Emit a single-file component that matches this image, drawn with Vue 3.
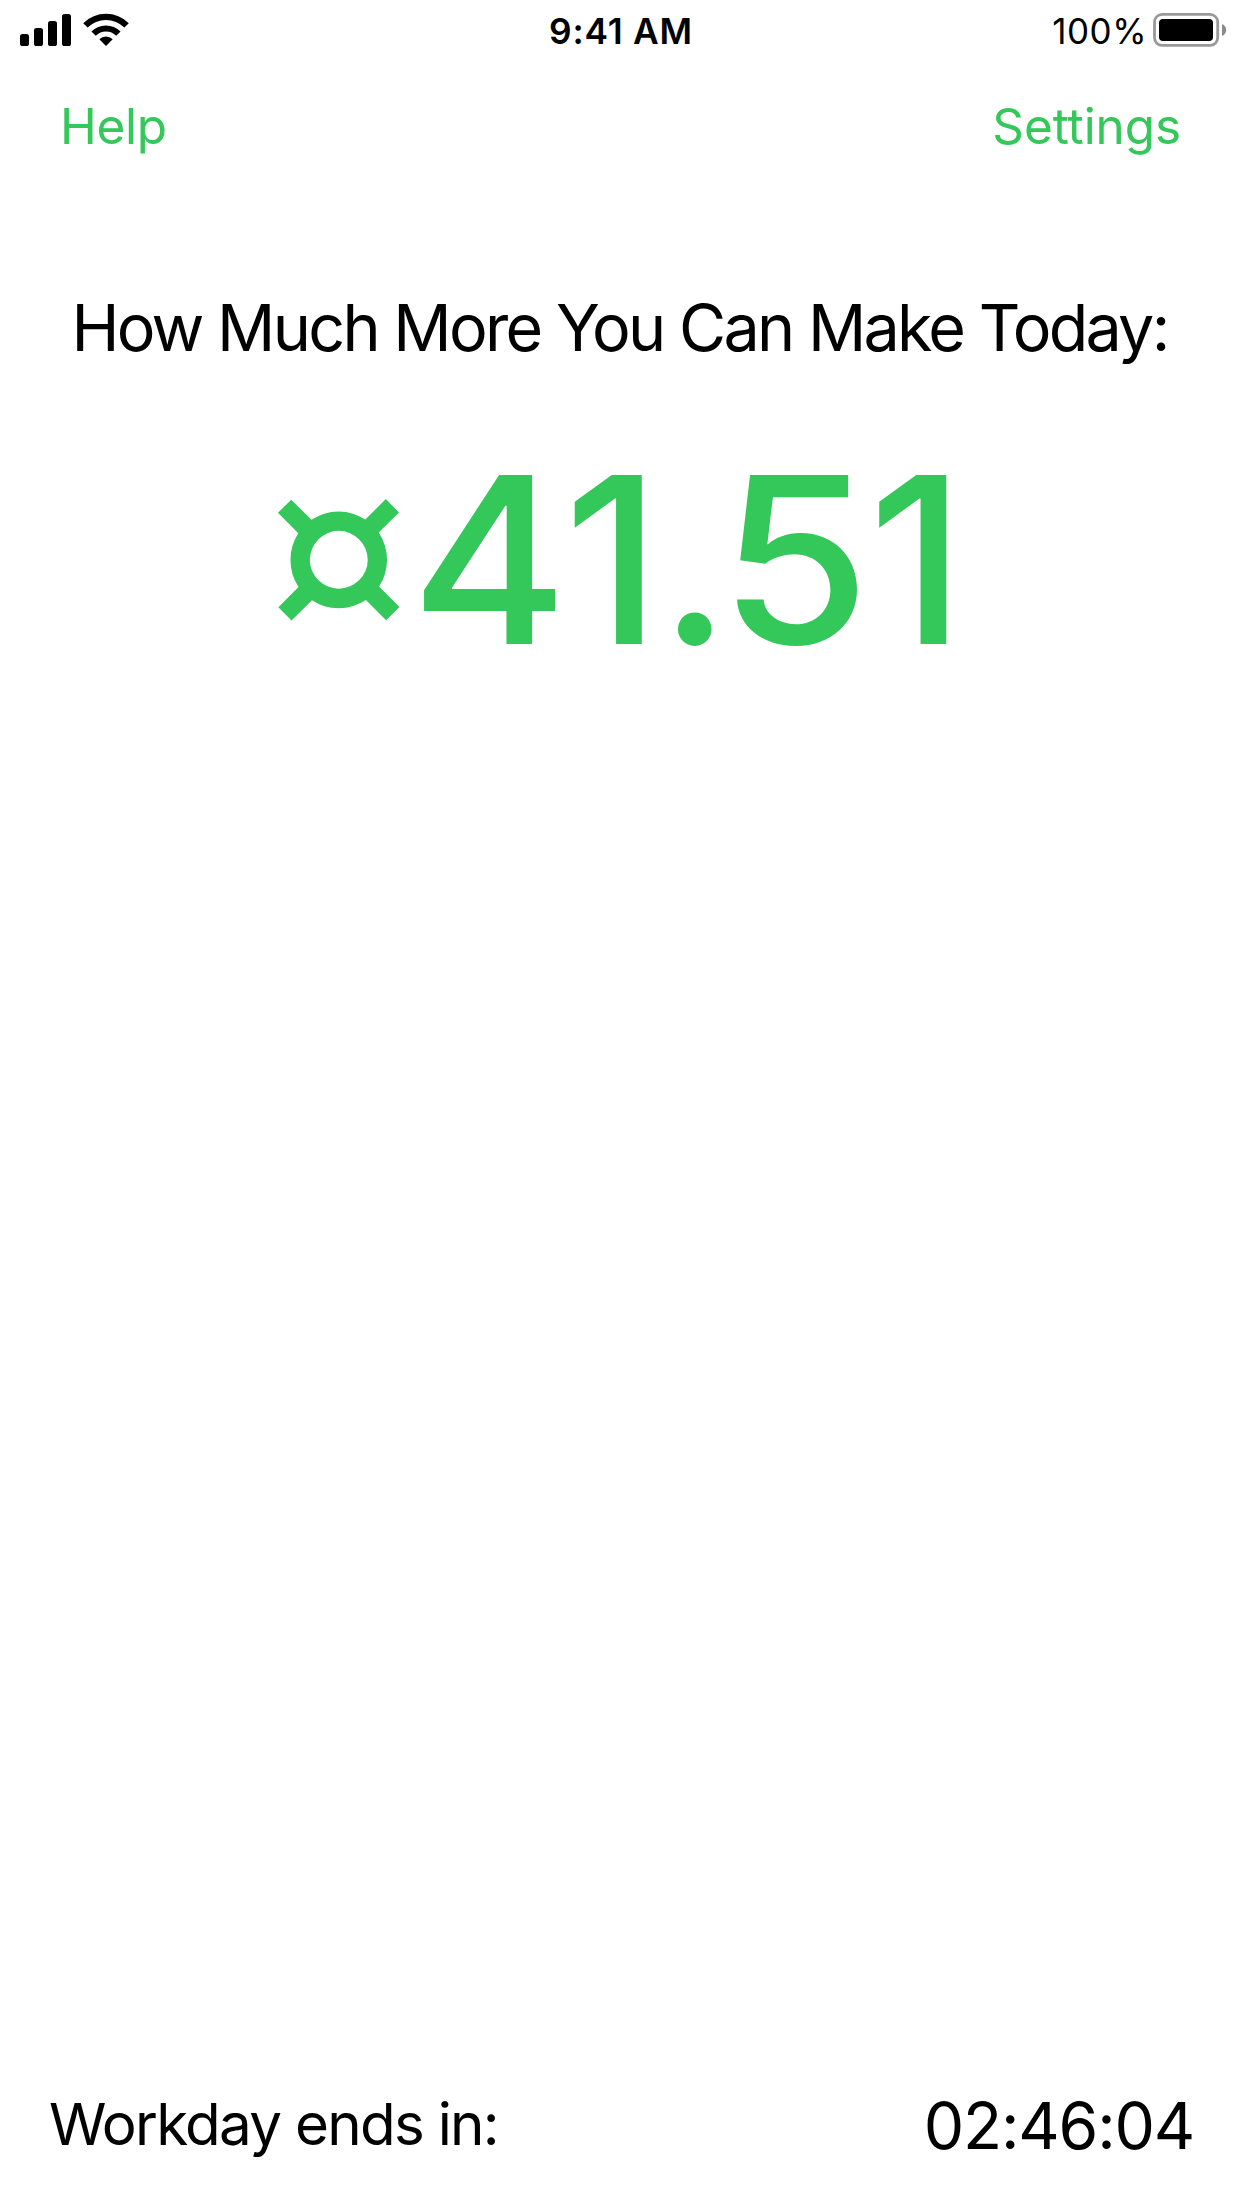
<script setup>
const amount = [
  { char: '¤', cls: 'currency' },
  { char: '4', cls: 'four' },
  { char: '1', cls: 'one' },
  { char: '.', cls: 'point' },
  { char: '5', cls: 'five' },
  { char: '1', cls: 'last' },
]
const remaining = '02:46:04'
</script>

<template>
  <div class="screen">
    <header class="status">
      <div class="left">
        <svg width="110" height="34" viewBox="20 13 110 34">
          <rect x="20" y="34" width="9" height="12" rx="2.6" />
          <rect x="34" y="28" width="9" height="18" rx="2.6" />
          <rect x="48" y="21" width="9" height="25" rx="2.6" />
          <rect x="62" y="14" width="9" height="32" rx="2.6" />
          <path d="M83.2 23.2 A32.5 32.5 0 0 1 128.8 23.2 L124.4 27.6 A26 26 0 0 0 87.6 27.6 Z" />
          <path d="M91.4 31.4 A20.8 20.8 0 0 1 120.6 31.4 L116.2 35.8 A14.4 14.4 0 0 0 95.8 35.8 Z" />
          <path d="M99.3 39.3 A9.5 9.5 0 0 1 112.7 39.3 L106 46 Z" />
        </svg>
      </div>
      <span class="time">9:41 AM</span>
      <div class="right">
        <span class="pct">100%</span>
        <svg width="74" height="34" viewBox="1153 13 74 34">
          <rect x="1154.5" y="14.4" width="63.2" height="31" rx="7.6" fill="none" stroke="#999" stroke-width="2.8" />
          <rect x="1159" y="19" width="54" height="22" rx="4" />
          <path d="M1222 24 C1224.8 25 1226.2 27.4 1226.2 30 C1226.2 32.6 1224.8 35 1222 36 Z" fill="#8c8c8c" />
        </svg>
      </div>
    </header>
    <nav class="nav"><span class="help">Help</span><span class="settings">Settings</span></nav>
    <main class="main">
      <h1><span class="title">How Much More You Can Make Today:</span></h1>
      <div class="amount"><span v-for="(a, i) in amount" :key="i" :class="a.cls">{{ a.char }}</span></div>
    </main>
    <footer class="footer"><span class="label">Workday ends in:</span><span class="clock">{{ remaining }}</span></footer>
  </div>
</template>

<style>
body { background: #fff; }
</style>
<style scoped>
.screen { width: 1242px; height: 2208px; display: flex; flex-direction: column; font-family: Inter, sans-serif; color: #000; overflow: hidden; white-space: nowrap; }
.status { height: 60px; display: grid; grid-template-columns: 1fr auto 1fr; align-items: center; padding: 0 15px 0 20px; }
.status svg { display: block; }
.right { display: flex; justify-content: flex-end; align-items: center; gap: 6px; }
.time { font-size: 35.3px; font-weight: 600; letter-spacing: 0.8px; padding: 3px 5px 0 0; }
.pct { font-size: 35px; letter-spacing: 0.5px; padding-top: 2px; }
.nav { height: 130px; display: flex; justify-content: space-between; align-items: center; padding: 2px 61px 0 60px; box-sizing: border-box; font-size: 49.5px; color: #34c759; }
.help { letter-spacing: -0.3px; }
.settings { letter-spacing: -0.1px; }
.main { flex: 1; text-align: center; }
h1 { margin: 88px 3px 0 0; font-size: 64.6px; font-weight: 400; line-height: 100px; }
.title { letter-spacing: -2.72px; }
.amount { display: flex; justify-content: center; align-items: baseline; margin-top: 12px; padding-right: 16px; font-size: 232.4px; font-weight: 500; color: #34c759; line-height: 300px; }
.currency { font-family: Lato, sans-serif; font-size: 268px; position: relative; top: 6px; }
.four { margin-left: -3.5px; transform: scaleX(1.03); }
.one { margin-left: -1.5px; }
.point { margin-left: -1px; }
.five { margin-left: -7.3px; transform: scaleX(1.05); }
.last { margin-left: 2.4px; }
.footer { height: 166px; display: flex; justify-content: space-between; align-items: center; padding: 0 50px 0 49px; }
.label { font-size: 58.3px; letter-spacing: -1.72px; margin-top: -2px; }
.clock { font-size: 64.2px; letter-spacing: -1.2px; margin-right: -2px; }
</style>
